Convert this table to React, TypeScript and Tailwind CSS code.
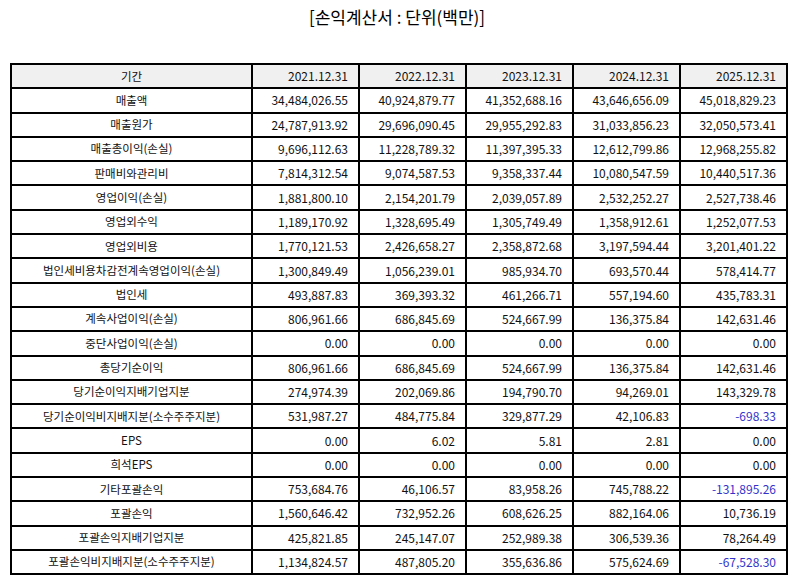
const years = ["2021.12.31", "2022.12.31", "2023.12.31", "2024.12.31", "2025.12.31"];

const rows: [string, string[]][] = [
  ["매출액", ["34,484,026.55", "40,924,879.77", "41,352,688.16", "43,646,656.09", "45,018,829.23"]],
  ["매출원가", ["24,787,913.92", "29,696,090.45", "29,955,292.83", "31,033,856.23", "32,050,573.41"]],
  ["매출총이익(손실)", ["9,696,112.63", "11,228,789.32", "11,397,395.33", "12,612,799.86", "12,968,255.82"]],
  ["판매비와관리비", ["7,814,312.54", "9,074,587.53", "9,358,337.44", "10,080,547.59", "10,440,517.36"]],
  ["영업이익(손실)", ["1,881,800.10", "2,154,201.79", "2,039,057.89", "2,532,252.27", "2,527,738.46"]],
  ["영업외수익", ["1,189,170.92", "1,328,695.49", "1,305,749.49", "1,358,912.61", "1,252,077.53"]],
  ["영업외비용", ["1,770,121.53", "2,426,658.27", "2,358,872.68", "3,197,594.44", "3,201,401.22"]],
  ["법인세비용차감전계속영업이익(손실)", ["1,300,849.49", "1,056,239.01", "985,934.70", "693,570.44", "578,414.77"]],
  ["법인세", ["493,887.83", "369,393.32", "461,266.71", "557,194.60", "435,783.31"]],
  ["계속사업이익(손실)", ["806,961.66", "686,845.69", "524,667.99", "136,375.84", "142,631.46"]],
  ["중단사업이익(손실)", ["0.00", "0.00", "0.00", "0.00", "0.00"]],
  ["총당기순이익", ["806,961.66", "686,845.69", "524,667.99", "136,375.84", "142,631.46"]],
  ["당기순이익지배기업지분", ["274,974.39", "202,069.86", "194,790.70", "94,269.01", "143,329.78"]],
  ["당기순이익비지배지분(소수주주지분)", ["531,987.27", "484,775.84", "329,877.29", "42,106.83", "-698.33"]],
  ["EPS", ["0.00", "6.02", "5.81", "2.81", "0.00"]],
  ["희석EPS", ["0.00", "0.00", "0.00", "0.00", "0.00"]],
  ["기타포괄손익", ["753,684.76", "46,106.57", "83,958.26", "745,788.22", "-131,895.26"]],
  ["포괄손익", ["1,560,646.42", "732,952.26", "608,626.25", "882,164.06", "10,736.19"]],
  ["포괄손익지배기업지분", ["425,821.85", "245,147.07", "252,989.38", "306,539.36", "78,264.49"]],
  ["포괄손익비지배지분(소수주주지분)", ["1,134,824.57", "487,805.20", "355,636.86", "575,624.69", "-67,528.30"]],
];

export default function App() {
  return (
    <div
      className="w-[794px] h-[586px] bg-white text-[#111]"
      style={{ fontFamily: '"Noto Sans CJK KR", "Noto Sans", sans-serif' }}
    >
      <h1 className="pt-[4px] h-[63px] text-center text-[17px] leading-[26px] text-black">
        [손익계산서 : 단위(백만)]
      </h1>

      <table className="ml-[10px] w-[776px] border-collapse text-[12px] table-fixed">
        <colgroup>
          <col className="w-[241px]" />
          <col className="w-[107px]" />
          <col className="w-[107px]" />
          <col className="w-[107px]" />
          <col className="w-[107px]" />
          <col className="w-[107px]" />
        </colgroup>
        <thead>
          <tr className="h-[24.3px] bg-[#f0f0f0]">
            <th className="border-2 border-black font-normal text-center text-[11.5px] p-0">기간</th>
            {years.map((y) => (
              <th key={y} className="border-2 border-black font-normal text-right pr-[10px] p-0">
                {y}
              </th>
            ))}
          </tr>
        </thead>
        <tbody>
          {rows.map(([label, vals]) => (
            <tr key={label} className="h-[24.3px]">
              <td className="border-2 border-black text-center text-[11.5px] p-0">{label}</td>
              {vals.map((v, i) => (
                <td
                  key={i}
                  className={
                    v.startsWith("-")
                      ? "border-2 border-black text-right pr-[10px] p-0 text-[#3333cc]"
                      : "border-2 border-black text-right pr-[10px] p-0"
                  }
                >
                  {v}
                </td>
              ))}
            </tr>
          ))}
        </tbody>
      </table>
    </div>
  );
}
